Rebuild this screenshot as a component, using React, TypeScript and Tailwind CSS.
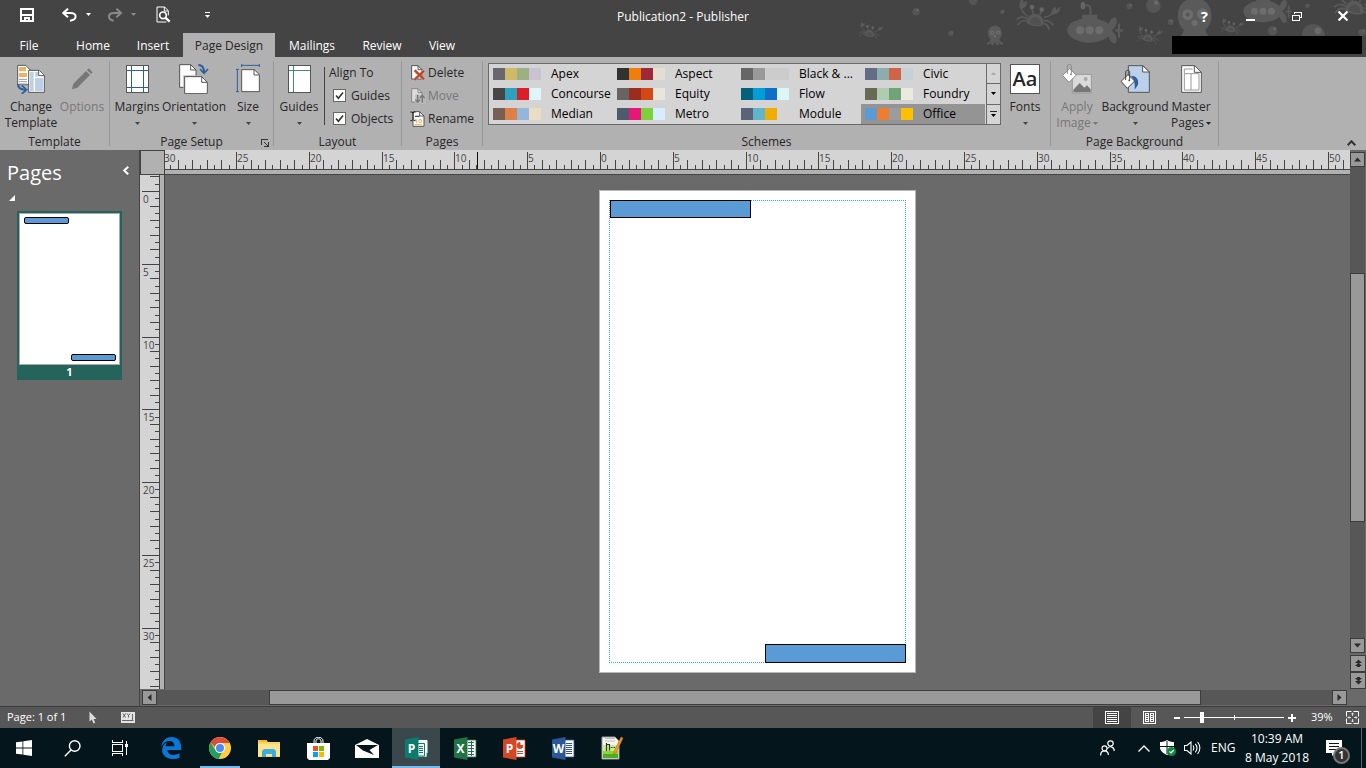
import type { ReactNode } from "react";

const SCHEMES: { name: string; colors: string[] }[] = [
  { name: "Apex", colors: ["#69676d", "#ceb966", "#9cb084", "#c9c2d1"] },
  { name: "Aspect", colors: ["#323232", "#f07f09", "#9f2936", "#e3ded1"] },
  { name: "Black & ...", colors: ["#666666", "#999999", "#cccccc", "#cccccc"] },
  { name: "Civic", colors: ["#646b86", "#8cadae", "#d16349", "#c5d1d7"] },
  { name: "Concourse", colors: ["#464646", "#2da2bf", "#da1f28", "#def5fa"] },
  { name: "Equity", colors: ["#696464", "#9b2d1f", "#d34817", "#e9e5dc"] },
  { name: "Flow", colors: ["#04617b", "#009dd9", "#0f6fc6", "#dbf5f9"] },
  { name: "Foundry", colors: ["#676a55", "#b0ccb0", "#72a376", "#eaebde"] },
  { name: "Median", colors: ["#775f55", "#dd8047", "#94b6dc", "#ebddc3"] },
  { name: "Metro", colors: ["#4e5b6f", "#ea157a", "#7fd13b", "#d6ecff"] },
  { name: "Module", colors: ["#5a6378", "#60b5cc", "#f0ad00", "#d4d4d4"] },
  { name: "Office", colors: ["#5b9bd5", "#ed7d31", "#9c9c9c", "#ffc000"] },
];

const TABS = [
  { name: "File", width: "w-[58px] mr-[5px]" },
  { name: "Home", width: "w-[60px]" },
  { name: "Insert", width: "w-[60px]" },
  { name: "Page Design", width: "w-[92px]" },
  { name: "Mailings", width: "w-[74px]" },
  { name: "Review", width: "w-[66px]" },
  { name: "View", width: "w-[54px]" },
];

// one ruler unit in pixels at 39% zoom
const UNIT = 14.56;

/* ---------- small pieces ---------- */

function Caret({ className = "" }: { className?: string }) {
  return (
    <svg width="5" height="3" viewBox="0 0 5 3" fill="currentColor" className={"inline-block shrink-0 " + className}>
      <path d="M0 0h5L2.5 3z" />
    </svg>
  );
}

function Group({ label, className, children, corner }: { label: string; className: string; children: ReactNode; corner?: ReactNode }) {
  return (
    <section className={"flex shrink-0 flex-col justify-between border-r border-[#979797] " + className}>
      <div className="flex">{children}</div>
      <div className="relative text-center leading-2">
        {label}
        {corner}
      </div>
    </section>
  );
}

function BigButton({
  icon,
  label,
  second,
  width,
  disabled,
}: {
  icon: ReactNode;
  label: string;
  second?: ReactNode;
  width: string;
  disabled?: boolean;
}) {
  return (
    <button disabled={disabled} className={"flex flex-col items-center whitespace-nowrap leading-4 disabled:text-[#777] " + width}>
      <span className="flex h-[38px] items-center justify-center pb-0.5">{icon}</span>
      <span>{label}</span>
      <span className="flex h-4 items-center gap-0.5">{second ?? <Caret className="text-[#444]" />}</span>
    </button>
  );
}

function Check({ id, label }: { id: string; label: string }) {
  return (
    <div className="flex h-[23px] items-center gap-[5px] pl-1">
      <span className="relative flex">
        <input id={id} type="checkbox" defaultChecked className="size-[13px] appearance-none border border-[#666] bg-white" />
        <svg viewBox="0 0 13 13" className="pointer-events-none absolute inset-0 size-[13px]" fill="none" stroke="#333" strokeWidth="1.6">
          <path d="M3 6.5 5.4 9.3 10 3.5" />
        </svg>
      </span>
      <label htmlFor={id}>{label}</label>
    </div>
  );
}

function ScrollButton({ className, children, label }: { className: string; children: ReactNode; label: string }) {
  return (
    <button aria-label={label} className={"flex shrink-0 items-center justify-center border border-[#3c3c3c] bg-[#999] " + className}>
      <svg width="9" height="9" viewBox="0 0 9 9" fill="#2b2b2b">
        {children}
      </svg>
    </button>
  );
}

/* ---------- ribbon icons ---------- */

function TemplateIcon() {
  return (
    <svg width="28" height="30" viewBox="51 192 84 90">
      <path d="M53 196h24l14 14v44H53z" fill="#fff" stroke="#555" strokeWidth="3" />
      <path d="M57 201h21v13H57zM57 219h24v12H57z" fill="#e6b566" />
      <path d="M57 238h24M57 245h24M57 252h24" stroke="#999" strokeWidth="3" />
      <path d="M86 211h32l15 15v51H86z" fill="#fff" stroke="#555" strokeWidth="3" />
      <path d="M90 216h11v57H90zM105 234h24v39h-24zM105 216h9v14h-9z" fill="#bcd0ea" />
      <path d="M116 211v16h17" fill="#fff" stroke="#555" strokeWidth="3" />
      <path d="M54 252c0 12 7 17 22 17" fill="none" stroke="#2a5f9e" strokeWidth="6" />
      <path d="m65 256 15 13-15 13" fill="none" stroke="#2a5f9e" strokeWidth="5" />
    </svg>
  );
}

function PencilIcon() {
  return (
    <svg width="22" height="24" viewBox="225 198 66 72" fill="#777">
      <path d="m228 265 4-17 38-38 12 12-38 38zM273 207l5-5 12 12-5 5z" />
    </svg>
  );
}

function MarginsIcon() {
  return (
    <svg width="23" height="28" viewBox="0 0 23 28" shapeRendering="crispEdges">
      <path d="M.5.5h22v27H.5z" fill="#fff" stroke="#555" />
      <path d="M5.5 1v26M17.5 1v26M1 5.5h21M1 22.5h21" stroke="#2a5f9e" />
    </svg>
  );
}

function GuidesIcon() {
  return (
    <svg width="23" height="28" viewBox="0 0 23 28" shapeRendering="crispEdges">
      <path d="M.5.5h22v27H.5z" fill="#fff" stroke="#555" />
      <path d="M5.5 1v26M1 5.5h21" stroke="#4b8871" />
    </svg>
  );
}

function OrientationIcon() {
  return (
    <svg width="30" height="30" viewBox="537 192 90 90">
      <path d="M539 194h33l16 16v52h-49z" fill="#fff" stroke="#555" strokeWidth="3" />
      <path d="M572 194v16h16" fill="none" stroke="#555" strokeWidth="3" />
      <path d="M550 226h80v60h-80z" fill="#b1b1b1" />
      <path d="M554 230h51l17 17v34h-68z" fill="#fff" stroke="#555" strokeWidth="3" />
      <path d="M605 230v17h17" fill="none" stroke="#555" strokeWidth="3" />
      <path d="M595 195c12 0 17 8 17 22" fill="none" stroke="#2a5f9e" strokeWidth="6" />
      <path d="m600 207 12 13 12-13" fill="none" stroke="#2a5f9e" strokeWidth="5" />
    </svg>
  );
}

function SizeIcon() {
  return (
    <svg width="24" height="30" viewBox="708 192 72 90">
      <path d="M725 209h38l15 15v51h-53z" fill="#fff" stroke="#555" strokeWidth="3" />
      <path d="M762 209v16h16" fill="none" stroke="#555" strokeWidth="3" />
      <path d="M725 196h53M725 192v9M778 192v9M712 209v66M708 208h9M708 275h9" stroke="#2a5f9e" strokeWidth="3" />
    </svg>
  );
}

function DeleteIcon() {
  return (
    <svg width="16" height="16" viewBox="420 26 48 48">
      <path d="M425 28h19l12 12v28h-31z" fill="#fff" stroke="#555" strokeWidth="3" />
      <path d="M444 28v12h12" fill="none" stroke="#555" strokeWidth="3" />
      <path d="m434 42 28 27M462 43l-28 27" stroke="#b1b1b1" strokeWidth="10" />
      <path d="m434 42 28 27M462 43l-28 27" stroke="#c8401e" strokeWidth="6" />
    </svg>
  );
}

function MoveIcon() {
  return (
    <svg width="16" height="16" viewBox="420 94 48 48">
      <path d="M425 96h19l12 12v28h-31z" fill="#ddd" stroke="#888" strokeWidth="3" />
      <path d="M444 96v12h12" fill="none" stroke="#888" strokeWidth="3" />
      <path d="M436 114h32v28h-32z" fill="#b9b9b9" />
      <path d="M443 114v22M436 129l7 8 7-8M457 138v-22M450 124l7-8 7 8" fill="none" stroke="#777" strokeWidth="4" />
    </svg>
  );
}

function RenameIcon() {
  return (
    <svg width="16" height="16" viewBox="416 162 48 48">
      <path d="M425 164h20l13 13v31h-33z" fill="#fff" stroke="#555" strokeWidth="3" />
      <path d="M445 164v13h13" fill="none" stroke="#555" strokeWidth="3" />
      <path d="M417 165h5l3 3 3-3h5M425 168v20M417 191h5l3-3 3 3h5" fill="none" stroke="#222" strokeWidth="3" />
      <path d="M431 178h14" stroke="#2a5f9e" strokeWidth="4" />
      <path d="M429 188h7v11M443 188h8v8h-8zM429 203h23" fill="none" stroke="#e6b566" strokeWidth="3" />
    </svg>
  );
}

function Bucket({ x, y }: { x: number; y: number }) {
  return (
    <g transform={`translate(${x} ${y})`}>
      <path d="m2 34 21-20 20 19-22 22z" fill="#fff" stroke="currentColor" strokeWidth="3" />
      <path d="M16 30V6c0-7 12-7 12 0v22" fill="none" stroke="currentColor" strokeWidth="3" />
      <circle cx="27" cy="31" r="3" fill="currentColor" />
    </g>
  );
}

function ApplyImageIcon() {
  return (
    <svg width="30" height="30" viewBox="307 25 90 90" className="text-[#888]">
      <path d="M338 56h57v56h-57z" fill="#dadada" stroke="#999" strokeWidth="3" />
      <path d="m341 110 0-8 19-20 14 14 8-7 11 12v9z" fill="#777" />
      <circle cx="378" cy="70" r="6" fill="#aaa" />
      <Bucket x={307} y={25} />
    </svg>
  );
}

function BackgroundIcon() {
  return (
    <svg width="30" height="30" viewBox="480 27 90 90">
      <path d="M505 32h44l19 19v61h-63z" fill="#bcd0ea" stroke="#555" strokeWidth="3" />
      <path d="M548 32v19h20z" fill="#fff" stroke="#555" strokeWidth="3" />
      <path d="M511 62c18 0 26 10 23 27l-10 15c2-20-2-34-13-42z" fill="#2a5f9e" />
      <g className="text-[#444]">
        <Bucket x={481} y={45} />
      </g>
    </svg>
  );
}

function MasterIcon() {
  return (
    <svg width="21" height="28" viewBox="663 30 63 84">
      <path d="M665 32h39l20 20v60h-59z" fill="#fff" stroke="#555" strokeWidth="3" />
      <path d="M703 32v20h21" fill="none" stroke="#555" strokeWidth="3" />
      <path d="M673 42h25M673 42v13M673 56h44v49h-44zM693 56v49" fill="none" stroke="#999" strokeWidth="3" />
    </svg>
  );
}

/* ---------- window frame ---------- */

function Crab({ x, y, s }: { x: number; y: number; s: number }) {
  return (
    <g transform={`translate(${x} ${y}) scale(${s})`}>
      <path d="M-31 18C-28-2-16-10-4-9 14-8 24 8 20 26c-16 6-34 2-51-8z" fill="#5a5a5a" />
      <path d="M-22 16c6-12 14-17 22-14s13 12 12 22c-12 2-24-1-34-8z" fill="#505050" />
      <g fill="none" stroke="#5a5a5a" strokeWidth="5">
        <path d="M-26 0c-14-10-22-20-20-32M22 2c14-2 24-8 30-18M-28 6c-14-8-22-6-32 2M-30 13c-14-3-20 2-27 12M22 12c12-2 20 3 28 13M20 20c10 2 16 10 18 20M-10-8l-4-16M10-6l6-12" />
      </g>
      <path d="M-50-24c-4-14 0-24 8-32l2 14 10-6c4 14-6 24-20 24zM44-8c0-12 6-20 14-20l0 8 12-10c2 14-8 26-26 22z" fill="#5a5a5a" />
      <circle cx="-14" cy="-29" r="7" fill="#666" />
      <circle cx="15" cy="-21" r="7" fill="#666" />
    </g>
  );
}

function Submarine({ x, y, s }: { x: number; y: number; s: number }) {
  return (
    <g transform={`translate(${x} ${y}) scale(${s})`} fill="#5a5a5a">
      <ellipse rx="66" ry="37" />
      <path d="M-22-47h46v16h-46zM54-8c6-22 16-34 26-30 6 14 0 28-14 38 14 10 20 26 14 38-10 6-20-8-26-30zM78-3h22v7H78zM86-20h6v42h-6z" />
      <path d="M-10-76C8-74 3-62 3-44" fill="none" stroke="#5a5a5a" strokeWidth="6" />
      <ellipse cx="-19" cy="-74" rx="7" ry="11" fill="#666" />
      <g fill="#6d6d6d">
        <circle cx="-28" cy="0" r="12" />
        <circle cx="1" cy="0" r="12" />
        <circle cx="30" cy="0" r="12" />
      </g>
    </g>
  );
}

function Octopus({ x, y, s }: { x: number; y: number; s: number }) {
  return (
    <g transform={`translate(${x} ${y}) scale(${s})`}>
      <path d="M-22 2c0-32 44-32 44 0 0 8-4 14-8 18 3 10 8 9 13 14l-4 4c-6 0-9-4-11-8l0 8-6 2-6-10-6 10-6-2 0-8c-2 5-5 8-12 7l-2-4c6-3 10-6 12-13-5-4-8-11-8-18z" fill="#5a5a5a" />
      <circle cx="-9" cy="0" r="7" fill="#6d6d6d" />
      <circle cx="10" cy="-1" r="7" fill="#6d6d6d" />
      <circle cx="-9" cy="0" r="2.5" fill="#555" />
      <circle cx="10" cy="-1" r="2.5" fill="#555" />
      <circle cx="0" cy="11" r="4" fill="#6d6d6d" />
    </g>
  );
}

function SeaPattern() {
  const bubbles = [
    [228, 35, 11], [333, 100, 8], [400, 2, 13], [487, 36, 7], [868, 19, 9], [940, 17, 22],
    [992, 66, 9], [1298, 92, 14], [1402, 18, 7], [1420, 106, 34], [1566, 97, 11],
  ];
  return (
    <svg aria-hidden="true" width="526" height="57" viewBox="0 0 1578 171" className="absolute top-0 right-0">
      {bubbles.map(([x, y, r]) => (
        <g key={x}>
          <circle cx={x} cy={y} r={r} fill="#555" />
          <circle cx={x + r * 0.4} cy={y - r * 0.4} r={r * 0.3} fill="#6a6a6a" />
        </g>
      ))}
      <Crab x={90} y={95} s={0.55} />
      <Crab x={590} y={50} s={1} />
      <Crab x={926} y={108} s={0.58} />
      <Crab x={1174} y={82} s={0.52} />
      <Crab x={1548} y={12} s={1.1} />
      <Submarine x={748} y={91} s={1} />
      <Submarine x={1268} y={34} s={0.88} />
      <Octopus x={465} y={98} s={0.95} />
      <Octopus x={1064} y={44} s={2.3} />
    </svg>
  );
}

function TitleBar() {
  return (
    <div className="relative grid h-[33px] grid-cols-[1fr_auto_1fr] items-center text-white">
      <div className="flex items-center pb-1 pl-5">
        <button aria-label="Save">
          <svg width="14" height="14" viewBox="0 0 14 14" fill="none" stroke="#fff" strokeWidth="2" className="block">
            <path d="M1 1h12v12H1zM2 7h10" />
            <path d="M5 14v-4h4v4" />
          </svg>
        </button>
        <button aria-label="Undo" className="ml-7">
          <svg width="16" height="14" viewBox="188 22 48 42" fill="none" stroke="#fff" strokeWidth="6" className="block">
            <path d="M194 37h20c20 0 20 20-2 23" />
            <path d="m206 24-14 13 14 13" />
          </svg>
        </button>
        <button aria-label="Undo list" className="ml-2 flex"><Caret /></button>
        <button aria-label="Redo" className="ml-4 text-[#8a8a8a]">
          <svg width="16" height="14" viewBox="318 22 48 42" fill="none" stroke="currentColor" strokeWidth="6" className="block">
            <path d="M358 37h-18c-22 0-20 20-2 23" />
            <path d="m346 24 14 13-14 13" />
          </svg>
        </button>
        <button aria-label="Redo list" className="ml-2 flex text-[#8a8a8a]"><Caret /></button>
        <button aria-label="Print preview" className="ml-5">
          <svg width="15" height="17" viewBox="464 19 45 51" fill="none" stroke="#fff" className="block">
            <path d="M501 47V33l-11-11h-23v45h28" strokeWidth="3" />
            <path d="M489 22v12h11" strokeWidth="3" />
            <circle cx="485" cy="47" r="10" strokeWidth="5" />
            <path d="m492 54 13 12" strokeWidth="7" />
          </svg>
        </button>
        <button aria-label="Customize toolbar" className="ml-[34px] flex flex-col items-center gap-0.5">
          <span className="h-px w-[5px] bg-white" />
          <Caret />
        </button>
      </div>
      <h1>Publication2 - Publisher</h1>
      <div className="flex items-center justify-end pr-[18px] pb-0.5">
        <button aria-label="Help" className="mr-[38px] text-[15px] font-bold leading-4">?</button>
        <button aria-label="Minimize" className="mr-[37px] flex h-3 items-end"><span className="mb-px h-0.5 w-[9px] bg-white" /></button>
        <button aria-label="Restore" className="mr-9">
          <svg width="10" height="10" viewBox="0 0 10 10" fill="none" stroke="#fff" shapeRendering="crispEdges" className="block">
            <path d="M.5 4h7v5.5h-7zM0 4.5h8M2.500 3V1h7v5.5H8M2 1.5h8" />
          </svg>
        </button>
        <button aria-label="Close">
          <svg width="10" height="10" viewBox="0 0 10 10" stroke="#fff" strokeWidth="2.2" className="block">
            <path d="m.5.500 9 9M9.500.500l-9 9" />
          </svg>
        </button>
      </div>
    </div>
  );
}

function Tabs() {
  return (
    <nav className="relative flex h-6">
      {TABS.map((tab) => (
        <button
          key={tab.name}
          className={tab.width + " pt-px leading-6 " + (tab.name === "Page Design" ? "bg-[#b1b1b1] text-[#262626]" : "text-white")}
        >
          {tab.name}
        </button>
      ))}
      <div className="mt-[3px] mr-1 ml-auto h-[18px] w-[190px] bg-black" />
    </nav>
  );
}

/* ---------- ribbon ---------- */

function Gallery() {
  return (
    <div className="mt-0.5 ml-[5px] flex h-[62px] border border-[#6a6a6a] bg-[#d4d4d4] text-black">
      <div className="grid grid-cols-[124px_124px_124px_124px]">
        {SCHEMES.map((s) => (
          <button key={s.name} className={"flex h-5 items-center pl-1 " + (s.name === "Office" ? "bg-[#949494]" : "")}>
            {s.colors.map((c, i) => (
              <span key={i} className="size-3" style={{ backgroundColor: c }} />
            ))}
            <span className="ml-2.5 whitespace-nowrap leading-5">{s.name}</span>
          </button>
        ))}
      </div>
      <div className="ml-px flex w-3.5 flex-col divide-y divide-[#6a6a6a] border-l border-[#6a6a6a]">
        <button aria-label="Row up" className="flex flex-1 items-center justify-center text-[#aaa]"><Caret className="rotate-180" /></button>
        <button aria-label="Row down" className="flex flex-1 items-center justify-center"><Caret /></button>
        <button aria-label="More schemes" className="flex flex-1 flex-col items-center justify-center gap-0.5">
          <span className="h-px w-[7px] bg-[#262626]" />
          <Caret />
        </button>
      </div>
    </div>
  );
}

function Ribbon() {
  return (
    <div className="relative flex h-[93px] shrink-0 bg-[#b1b1b1] py-1 text-[#262626]">
      <Group label="Template" className="w-[110px]">
        <BigButton icon={<TemplateIcon />} label="Change" second="Template" width="ml-0.5 w-[58px]" />
        <BigButton icon={<PencilIcon />} label="Options" second=" " width="w-11" disabled />
      </Group>
      <Group
        label="Page Setup"
        className="w-[164px]"
        corner={
          <button aria-label="Page setup dialog" className="absolute top-px right-1">
            <svg width="8" height="8" viewBox="0 0 8 8" fill="none" stroke="#333" shapeRendering="crispEdges" className="block">
              <path d="M.5 6V.5H7M3 3l4 4M7.500 3v4.500H3" />
            </svg>
          </button>
        }
      >
        <BigButton icon={<MarginsIcon />} label="Margins" width="w-[54px]" />
        <BigButton icon={<OrientationIcon />} label="Orientation" width="w-[60px]" />
        <BigButton icon={<SizeIcon />} label="Size" width="w-12" />
      </Group>
      <Group label="Layout" className="w-32">
        <BigButton icon={<GuidesIcon />} label="Guides" width="w-[50px]" />
        <div className="my-1.5 border-l border-[#444]" />
        <div role="group" aria-labelledby="align-to" className="pl-1">
          <div id="align-to" className="h-[23px] leading-[23px]">Align To</div>
          <Check id="guides" label="Guides" />
          <Check id="objects" label="Objects" />
        </div>
      </Group>
      <Group label="Pages" className="w-[81px]">
        <div className="flex flex-col pl-2">
          <button className="flex h-[23px] items-center gap-0.5"><DeleteIcon />Delete</button>
          <button disabled className="flex h-[23px] items-center gap-0.5 text-[#777]"><MoveIcon />Move</button>
          <button className="flex h-[23px] items-center gap-0.5"><RenameIcon />Rename</button>
        </div>
      </Group>
      <Group label="Schemes" className="w-[568px]">
        <Gallery />
        <BigButton
          icon={<span className="flex size-[30px] items-center justify-center border border-[#555] bg-white text-xl font-semibold">Aa</span>}
          label="Fonts"
          width="w-12"
        />
      </Group>
      <Group label="Page Background" className="w-[168px]">
        <BigButton icon={<ApplyImageIcon />} label="Apply" second={<>Image<Caret /></>} width="w-[52px]" disabled />
        <BigButton icon={<BackgroundIcon />} label="Background" width="w-16" />
        <BigButton icon={<MasterIcon />} label="Master" second={<>Pages<Caret /></>} width="w-12" />
      </Group>
      <button aria-label="Collapse the ribbon" className="mt-auto mr-2.5 ml-auto">
        <svg width="9" height="6" viewBox="0 0 9 6" fill="none" stroke="#333" strokeWidth="2">
          <path d="m.7 5.200 3.800-4 3.800 4" />
        </svg>
      </button>
    </div>
  );
}

/* ---------- workspace ---------- */

function PagesPane() {
  return (
    <aside className="w-[140px] shrink-0 border-r border-[#444] bg-[#6a6a6a] text-white">
      <div className="flex items-center justify-between pt-2 pr-2.5 pl-[7px]">
        <h2 className="text-xl leading-[29px]">Pages</h2>
        <button aria-label="Collapse pane" className="pb-1">
          <svg width="6" height="9" viewBox="0 0 6 9" fill="none" stroke="#fff" strokeWidth="2" className="block">
            <path d="m5.200.700-4 3.800 4 3.800" />
          </svg>
        </button>
      </div>
      <svg width="6" height="6" viewBox="0 0 6 6" className="mt-2 ml-[9px]" fill="#fff"><path d="M6 0v6H0z" /></svg>
      <button className="mt-2.5 ml-[17px] flex w-[105px] flex-col items-center bg-[#24645a] p-0.5">
        <span className="relative block h-[152px] w-full border border-[#aaa] bg-white">
          <span className="absolute top-[3px] left-1 h-[7px] w-[45px] rounded-xs border border-black bg-[#5b9bd5]" />
          <span className="absolute right-[3px] bottom-[3px] h-[7px] w-[45px] rounded-xs border border-black bg-[#5b9bd5]" />
        </span>
        <span className="text-[11px] font-bold leading-[13px]">1</span>
      </button>
    </aside>
  );
}

function Ruler({ vertical, zero, from, to }: { vertical?: boolean; zero: number; from: number; to: number }) {
  const ticks = [];
  for (let k = from * 2; k <= to * 2; k++) {
    const pos = Math.round(zero + (k * UNIT) / 2);
    const size = k % 10 === 0 ? 17 : k % 2 === 0 ? 9 : 4;
    ticks.push({ k, pos, size });
  }
  return (
    <svg className="h-full w-full bg-[#d4d4d4]" shapeRendering="crispEdges">
      {ticks.map(({ k, pos, size }) =>
        vertical ? (
          <rect key={k} x={19 - size} y={pos} width={size} height="1" fill="#444" />
        ) : (
          <rect key={k} x={pos} y={19 - size} width="1" height={size} fill="#444" />
        ),
      )}
      {ticks
        .filter(({ k }) => k % 10 === 0)
        .map(({ k, pos }) => (
          <text key={k} x={vertical ? 3 : pos + 1} y={vertical ? pos + 12 : 12} fontSize="10" fill="#444">
            {Math.abs(k / 2)}
          </text>
        ))}
      {vertical ? (
        <>
          <rect x="19" width="1" height="100%" fill="#444" />
          <rect x="20" width="4" height="100%" fill="#b1b1b1" />
          <rect x="24" width="1" height="100%" fill="#444" />
        </>
      ) : (
        <>
          <rect x="312" y="2" width="1" height="18" fill="#111" />
          <rect y="19" width="100%" height="1" fill="#444" />
          <rect y="20" width="100%" height="4" fill="#b1b1b1" />
          <rect y="24" width="100%" height="1" fill="#444" />
        </>
      )}
    </svg>
  );
}

function Workspace() {
  return (
    <div className="flex min-w-0 flex-1 flex-col">
      <div className="flex h-[25px] shrink-0">
        <div className="w-[25px] shrink-0 border border-[#444] bg-[#b1b1b1]" />
        <div className="min-w-0 flex-1"><Ruler zero={435} from={-30} to={51} /></div>
      </div>
      <div className="flex min-h-0 flex-1">
        <div className="w-[25px] shrink-0"><Ruler vertical zero={16} from={-1} to={34} /></div>
        <div className="flex flex-1 justify-center overflow-hidden bg-[#6a6a6a] pt-[15px]">
          <div className="relative h-[483px] w-[317px] border border-[#b8b8b8] bg-white">
            <div className="absolute top-[9px] left-[9px] h-[463px] w-[297px] border border-dotted border-[#28b4c8]" />
            <div className="absolute top-[9px] left-2.5 h-[18px] w-[141px] border border-black bg-[#5b9bd5]" />
            <div className="absolute top-[453px] left-[165px] h-[19px] w-[141px] border border-black bg-[#5b9bd5]" />
          </div>
        </div>
      </div>
      <div className="flex h-[17px] shrink-0 bg-[#6a6a6a] py-px pr-[3px] pl-0.5">
        <ScrollButton label="Scroll left" className="w-[15px]"><path d="M6.500 1v7L2.500 4.500z" /></ScrollButton>
        <div className="flex flex-1 bg-[#575757]">
          <div className="grow-[112]" />
          <div className="grow-[932] border border-[#3c3c3c] bg-[#999]" />
          <div className="grow-[131]" />
        </div>
        <ScrollButton label="Scroll right" className="w-[15px]"><path d="M2.500 1v7l4-3.500z" /></ScrollButton>
      </div>
    </div>
  );
}

function VerticalScroll() {
  return (
    <div className="flex w-4 shrink-0 flex-col bg-[#6a6a6a] pt-0.5 pb-[17px]">
      <ScrollButton label="Scroll up" className="h-[15px] w-[15px]"><path d="M1 6.500h7L4.500 2.500z" /></ScrollButton>
      <div className="flex w-[15px] flex-1 flex-col bg-[#575757]">
        <div className="grow-[106]" />
        <div className="grow-[248] border border-[#3c3c3c] bg-[#999]" />
        <div className="grow-[117]" />
      </div>
      <ScrollButton label="Scroll down" className="h-[15px] w-[15px]"><path d="M1 2.500h7l-3.500 4z" /></ScrollButton>
      <ScrollButton label="Previous page" className="mt-0.5 h-[17px]"><path d="M1 4 4.500.5 8 4zM1 7l3.500-3.500L8 7zM3 7h3v1H3z" /></ScrollButton>
      <ScrollButton label="Next page" className="h-[17px]"><path d="M1 5l3.500 3.500L8 5zM1 2l3.500 3.500L8 2zM3 1h3v1H3z" /></ScrollButton>
    </div>
  );
}

function StatusBar() {
  return (
    <footer className="flex h-[22px] shrink-0 items-center border-t border-[#3c3c3c] bg-[#575757] text-[11px] text-white">
      <span className="ml-[7px] w-[82px]">Page: 1 of 1</span>
      <svg width="8" height="13" viewBox="0 0 8 13" fill="#ddd"><path d="M.5.500v10l2.300-2L4.500 12.500l1.700-.8L4.600 8H7.500z" /></svg>
      <svg width="14" height="11" viewBox="0 0 14 11" className="ml-6">
        <path d="M0 0h14v11H0z" fill="#e4e4e4" />
        <path d="m2 1.500 2.500 4M4.500 1.500l-2.500 4M6 1.500l1.500 2L9 1.500M7.500 3.500v2" stroke="#444" strokeWidth=".8" fill="none" />
        <path d="M1 8.500h11.500M11.500 2v7" stroke="#666" fill="none" />
      </svg>
      <button aria-label="Single page" className="ml-auto flex h-full w-[38px] items-center justify-center bg-[#444]">
        <svg width="14" height="13" viewBox="0 0 14 13" fill="none" stroke="#fff" shapeRendering="crispEdges">
          <path d="M.5.500h13v12H.5zM2 2.500h10M2 4.500h10M2 6.500h10M2 8.500h10M2 10.500h10" />
        </svg>
      </button>
      <button aria-label="Two-page spread" className="ml-3">
        <svg width="13" height="13" viewBox="0 0 13 13" fill="none" stroke="#fff" shapeRendering="crispEdges">
          <path d="M.5.500h12v12H.5zM2.500 2.500h3v8h-3zM7.500 2.500h3v8h-3zM3 4.500h2M3 6.500h2M3 8.500h2M8 4.500h2M8 6.500h2M8 8.500h2" />
        </svg>
      </button>
      <button aria-label="Zoom out" className="ml-[18px] h-0.5 w-1.5 bg-white" />
      <div className="relative ml-1 flex h-full w-[100px] items-center">
        <div className="absolute top-[10px] h-px w-full bg-white" />
        <div className="absolute top-[8px] left-1/2 h-[5px] w-px bg-white" />
        <input
          type="range"
          aria-label="Zoom"
          min="0"
          max="100"
          defaultValue="17"
          className="relative h-3 w-full appearance-none bg-transparent [&::-webkit-slider-thumb]:h-[11px] [&::-webkit-slider-thumb]:w-1 [&::-webkit-slider-thumb]:appearance-none [&::-webkit-slider-thumb]:bg-white"
        />
      </div>
      <button aria-label="Zoom in" className="ml-1">
        <svg width="8" height="8" viewBox="0 0 8 8" stroke="#fff" strokeWidth="2" className="block"><path d="M0 4h8M4 0v8" /></svg>
      </button>
      <button className="ml-[15px] w-[21px]">39%</button>
      <button aria-label="Fit page" className="mr-[7px] ml-3.5">
        <svg width="13" height="13" viewBox="0 0 13 13" fill="none" stroke="#fff" className="block">
          <path d="M.5.500h12v12H.5z" strokeDasharray="5 2 5 0" />
          <path d="M6.500 2v3M6.500 8v3M2 6.500h3M8 6.500h3M5.300 3.200l1.200-1.200 1.200 1.200M5.300 9.800l1.200 1.200 1.200-1.200M3.200 5.300 2 6.500l1.200 1.200M9.800 5.300l1.200 1.200-1.200 1.200" strokeWidth=".8" />
        </svg>
      </button>
    </footer>
  );
}

/* ---------- taskbar ---------- */

function OfficeIcon({ letter, color, children }: { letter: string; color: string; children: ReactNode }) {
  return (
    <svg width="23" height="23" viewBox="0 0 23 23">
      <path d="M11 3h11v17H11z" fill="#fff" stroke={color} strokeWidth=".8" />
      <g stroke={color} fill="none">{children}</g>
      <path d="M0 2.500 13.500 0v23L0 20.500z" fill={color} />
      <text x="6.500" y="16" textAnchor="middle" fontSize="12" fontWeight="bold" fill="#fff">{letter}</text>
    </svg>
  );
}

const LINES = "M14 6.500h6M14 8.500h6M14 10.500h6M14 12.500h6M14 14.500h6M14 16.500h6";

const SYSTEM_ICONS: { name: string; icon: ReactNode }[] = [
  {
    name: "Start",
    icon: <svg width="16" height="16" viewBox="0 0 16 16" fill="#fff"><path d="M0 2.300 6.500 1.400v6.200H0zM7.300 1.300 16 0v7.600H7.300zM0 8.400h6.500v6.200L0 13.700zM7.300 8.400H16V16l-8.700-1.300z" /></svg>,
  },
  {
    name: "Search",
    icon: <svg width="17" height="17" viewBox="0 0 17 17" fill="none" stroke="#fff" strokeWidth="1.400"><circle cx="10.700" cy="6" r="5.300" /><path d="M7 10 .8 16.200" /></svg>,
  },
  {
    name: "Task View",
    icon: (
      <svg width="17" height="16" viewBox="0 0 17 16" fill="none" stroke="#fff" shapeRendering="crispEdges">
        <path d="M.5 0v2.500h10V0M.5 16v-2.500h10V16M.5 4.500h10v7H.5zM14.500 1v14" />
        <path d="M13 4h3v3h-3z" fill="#fff" stroke="none" />
      </svg>
    ),
  },
];

const APP_ICONS: { name: string; icon: ReactNode; state?: "running" | "active" }[] = [
  {
    name: "Edge",
    icon: (
      <svg width="21" height="22" viewBox="483 350 62 66" fill="#0a78d7">
        <path d="M483 381c3-22 17-31 31-31 21 0 31 16 29 39h-41c1 16 20 19 36 10v13c-23 10-52 1-52-22 0-12 6-20 15-24-3 4-4 7-5 12h27c0-11-7-16-16-16-11 0-19 8-24 19z" />
      </svg>
    ),
  },
  {
    name: "Chrome",
    state: "running",
    icon: (
      <svg width="22" height="22" viewBox="0 0 22 22">
        <circle cx="11" cy="11" r="11" fill="#ffcd46" />
        <path d="M1.500 5.500A11 11 0 0 1 20.600 6H11a5 5 0 0 0-5 4z" fill="#dd4b3e" />
        <path d="M1.500 5.500 6.700 13.500A5 5 0 0 0 13 15.600L9.600 21.900A11 11 0 0 1 1.500 5.500z" fill="#1fa061" />
        <circle cx="11" cy="11" r="5" fill="#fff" />
        <circle cx="11" cy="11" r="4" fill="#4c8bf5" />
      </svg>
    ),
  },
  {
    name: "File Explorer",
    icon: (
      <svg width="22" height="19" viewBox="0 0 22 19">
        <path d="M0 1h8l2 2h12v15H0z" fill="#fcd663" />
        <path d="M0 5h22v12H0z" fill="#ffe48e" />
        <path d="M1 1h8v2H1z" fill="#f5b91c" />
        <path d="M4 18v-6l2-2h10l2 2v6h-4v-3H8v3z" fill="#36aee2" />
      </svg>
    ),
  },
  {
    name: "Store",
    icon: (
      <svg width="23" height="23" viewBox="0 0 23 23">
        <path d="M7 6V4c0-5 9-5 9 0v2M9 6V4c0-3 5-3 5 0v2" fill="none" stroke="#fff" />
        <path d="M0 6h23v15l-2 2H2l-2-2z" fill="#fff" />
        <path d="M6 9h5v5H6z" fill="#f25022" />
        <path d="M12 9h5v5h-5z" fill="#7fba00" />
        <path d="M6 15h5v5H6z" fill="#00a4ef" />
        <path d="M12 15h5v5h-5z" fill="#ffb900" />
      </svg>
    ),
  },
  {
    name: "Mail",
    icon: (
      <svg width="24" height="19" viewBox="0 0 24 19">
        <path d="M0 6 12 0l12 6v13H0z" fill="#fff" />
        <path d="M1 6h22l-8.500 5 4.500 5L8 11.500z" fill="#04161b" />
      </svg>
    ),
  },
  {
    name: "Publisher",
    state: "active",
    icon: (
      <OfficeIcon letter="P" color="#0a7b6c">
        <path d="M14 3.500h8V16" fill="#fff" stroke="#fff" />
        <path d="M12 6.500h7.500V19H12" fill="#fff" />
        <path d="M14 9.500h4M14 11.500h4M14 13.500h4M14 15.500h4" />
      </OfficeIcon>
    ),
  },
  {
    name: "Excel",
    icon: <OfficeIcon letter="X" color="#217346"><path d="M14 5.500h6M14 8.500h6M14 11.500h6M14 14.500h6M14 17.500h6M17.500 4v15" /></OfficeIcon>,
  },
  {
    name: "PowerPoint",
    icon: <OfficeIcon letter="P" color="#d24726"><path d="M17 5.500a3 3 0 1 0 3 3h-3z" fill="#d24726" /><path d="M14 14.500h6M14 16.500h6" /></OfficeIcon>,
  },
  { name: "Word", icon: <OfficeIcon letter="W" color="#2b579a"><path d={LINES} /></OfficeIcon> },
  {
    name: "Notepad++",
    icon: (
      <svg width="23" height="25" viewBox="0 0 23 25">
        <path d="M1 1h13l4 4v18H1z" fill="#f4f4f4" stroke="#999" />
        <path d="M2 9h15v6H2z" fill="#c9ee8c" />
        <path d="M2 15h15v4H2z" fill="#8ed33c" />
        <path d="M2 18h15v4H2z" fill="#4fae20" />
        <path d="M4 2.500h10M4 5h10" stroke="#bbb" />
        <path d="M5.500 7v8M5.500 8.500h3v6M10 11.500h1.500M12.500 11.500H14" stroke="#333" strokeWidth="1.200" fill="none" />
        <path d="m20 1 2 1-7 15-2.500 1.500.5-3z" fill="#f39c26" stroke="#a85f10" strokeWidth=".5" />
      </svg>
    ),
  },
];

function Taskbar() {
  return (
    <div className="flex h-10 shrink-0 bg-[#04161b] text-white">
      {SYSTEM_ICONS.map((item) => (
        <button key={item.name} aria-label={item.name} className="flex w-12 items-center justify-center">{item.icon}</button>
      ))}
      <div className="ml-[3px] flex gap-px">
        {APP_ICONS.map(({ name, icon, state }) => (
          <button
            key={name}
            aria-label={name}
            className={"relative flex w-12 items-center justify-center " + (state === "active" ? "bg-[#3a484d]" : "")}
          >
            {icon}
            {state === "running" && <span className="absolute inset-x-1 bottom-0 h-0.5 bg-[#76b9ed]" />}
            {state === "active" && <span className="absolute inset-x-0 bottom-0 h-0.5 bg-[#76b9ed]" />}
          </button>
        ))}
      </div>
      <div className="ml-auto flex items-center">
        <button aria-label="People">
          <svg width="15" height="16" viewBox="0 0 15 16" fill="none" stroke="#fff" strokeWidth="1.200">
            <circle cx="10.500" cy="3.500" r="2.700" />
            <circle cx="4.500" cy="8.300" r="2.500" />
            <path d="M.6 15.500c0-6 7.500-6 7.800-.5M7.500 8.500c2-3 6.500-2 6.800 2.500" />
          </svg>
        </button>
        <button aria-label="Show hidden icons" className="ml-[23px]">
          <svg width="12" height="7" viewBox="0 0 12 7" fill="none" stroke="#fff" strokeWidth="1.400"><path d="m.5 6.500 5.500-5.500 5.500 5.500" /></svg>
        </button>
        <button aria-label="Security" className="ml-2.5">
          <svg width="16" height="16" viewBox="0 0 16 16">
            <path d="M7 0c2 1.500 4.500 2 7 2v5c0 4-3 6-7 8C3 13 0 11 0 7V2c2.500 0 5-.5 7-2z" fill="#fff" />
            <path d="M7 1v13M0 6.500h14" stroke="#04161b" />
            <circle cx="11.500" cy="11.500" r="4.500" fill="#10893e" />
            <path d="m9.500 11.500 1.500 1.500 2.700-3" fill="none" stroke="#fff" strokeWidth="1.200" />
          </svg>
        </button>
        <button aria-label="Volume" className="ml-2">
          <svg width="17" height="14" viewBox="0 0 17 14" fill="none" stroke="#fff" strokeWidth="1.100">
            <path d="M.5 4.500h2.500l4-3.500v12L3 9.500H.5zM9 4.500c1 1.500 1 3.500 0 5M11.300 2.800c2 2.500 2 6 0 8.500M13.600 1c3 3.500 3 8.500 0 12" />
          </svg>
        </button>
        <button className="ml-2.5 w-6">ENG</button>
        <div className="ml-2.5 w-16 whitespace-nowrap text-center leading-[19px]">
          <div>10:39 AM</div>
          <div>8 May 2018</div>
        </div>
        <button aria-label="Notifications" className="relative mr-[11px] ml-[17px] h-6 w-6">
          <svg width="16" height="17" viewBox="0 0 16 17" className="absolute top-1 left-0"><path d="M0 0h16v13H9l-3 3v-3H0z" fill="#fff" /><path d="M3 3.500h10M3 6.500h10M3 9.500h7" stroke="#04161b" /></svg>
          <span className="absolute top-[11px] left-[7px] flex size-[17px] items-center justify-center rounded-full border-2 border-[#777] bg-[#333] text-[11px] font-semibold">1</span>
        </button>
        <div className="mr-1 h-10 border-l border-[#53646a]" />
      </div>
    </div>
  );
}

export default function App() {
  return (
    <div className="flex h-screen flex-col overflow-hidden bg-[#444] font-['Open_Sans','Noto_Sans',sans-serif] text-xs">
      <header className="relative shrink-0">
        <SeaPattern />
        <TitleBar />
        <Tabs />
      </header>
      <Ribbon />
      <main className="flex min-h-0 flex-1">
        <PagesPane />
        <Workspace />
        <VerticalScroll />
      </main>
      <StatusBar />
      <Taskbar />
    </div>
  );
}
